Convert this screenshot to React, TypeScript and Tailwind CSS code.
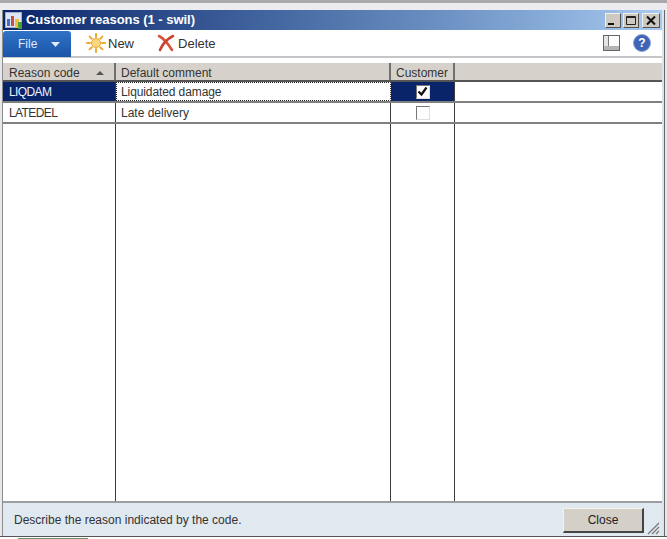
const font = "font-['Liberation_Sans',Arial,sans-serif]";

function AppIcon() {
  return (
    <svg width="18" height="17" viewBox="0 0 18 17" className="shrink-0">
      <rect x="0.5" y="0.5" width="16" height="15" fill="#dfe6f3" stroke="#9fb0d4" />
      <rect x="2" y="7" width="3" height="7" fill="#3c6fd0" />
      <rect x="6" y="4" width="3" height="10" fill="#d24a3a" />
      <rect x="10" y="7" width="4" height="9" fill="#e8c43a" />
      <rect x="13" y="10" width="4" height="7" fill="#4f9d3a" />
    </svg>
  );
}

function SunIcon() {
  return (
    <svg width="20" height="20" viewBox="0 0 20 20">
      <g stroke="#f0a92e" strokeWidth="2" strokeLinecap="round">
        <path d="M10 1v3M10 16v3M1 10h3M16 10h3M3.6 3.6l2.2 2.2M14.2 14.2l2.2 2.2M3.6 16.4l2.2-2.2M14.2 5.8l2.2-2.2" />
      </g>
      <circle cx="10" cy="10" r="4.5" fill="#f9d77e" stroke="#eda52c" />
    </svg>
  );
}

function DeleteIcon() {
  return (
    <svg width="18" height="18" viewBox="0 0 18 18">
      <path d="M2 2c4 2 8 6 13 14" fill="none" stroke="#d8523c" strokeWidth="2.6" strokeLinecap="round" />
      <path d="M16 2C10 5 6 9 3 16" fill="none" stroke="#c9432f" strokeWidth="2.6" strokeLinecap="round" />
    </svg>
  );
}

function WindowButton({ kind, className }: { kind: "min" | "max" | "close"; className: string }) {
  return (
    <div className={`h-[15px] bg-[#cdc9c1] border border-[#f0f0ec] border-r-[#55534f] border-b-[#55534f] flex items-center justify-center ${className}`}>
      <svg width="12" height="11" viewBox="0 0 12 11">
        {kind === "min" && <rect x="1" y="8" width="6" height="2" fill="#111" />}
        {kind === "max" && <path d="M1.5 1.5h9v8h-9zM1.5 2.5h9" fill="none" stroke="#222" />}
        {kind === "close" && <path d="M2 1.5l8 8M10 1.5l-8 8" stroke="#111" strokeWidth="2" />}
      </svg>
    </div>
  );
}

function HeaderCell({ className, children }: { className: string; children?: React.ReactNode }) {
  return (
    <div className={`h-[17px] pt-[2px] flex items-center bg-[#d6d2cb] border-r-2 border-[#6f6f6f] text-[12px] text-[#333] ${className}`}>
      {children}
    </div>
  );
}

function Row({
  code,
  comment,
  checked,
  selected,
}: {
  code: string;
  comment: string;
  checked?: boolean;
  selected?: boolean;
}) {
  return (
    <div className="flex h-[21px] border-b-2 border-[#808080] text-[12px]">
      <div
        className={`w-[113px] pl-[6px] flex items-center border-r border-[#3a3a3a] tracking-[-0.6px] ${
          selected ? "bg-[#0a246a] text-[#eef2ff]" : "text-[#333]"
        }`}
      >
        {code}
      </div>
      <div
        className={`w-[275px] flex items-center border-r border-[#3a3a3a] text-[#333] ${
          selected ? "pl-[4px] border-y border-l border-dotted border-y-[#222] border-l-[#222] tracking-[-0.1px]" : "pl-[5px]"
        }`}
      >
        {comment}
      </div>
      <div className={`w-[64px] flex items-center justify-center border-r border-[#3a3a3a] ${selected ? "bg-[#0a246a]" : ""}`}>
        <div className="w-[14px] h-[14px] bg-white border border-[#777] border-r-[#dedede] border-b-[#dedede] flex items-center justify-center">
          {checked && (
            <svg width="11" height="11" viewBox="0 0 11 11">
              <path d="M1.5 5.5l3 3 5-7" fill="none" stroke="#111" strokeWidth="2.2" />
            </svg>
          )}
        </div>
      </div>
      <div className="flex-1" />
    </div>
  );
}

export default function App() {
  return (
    <div className={`${font} w-[667px] h-[539px] overflow-hidden flex flex-col bg-[#e6e7eb]`}>
      <div className="h-[3px] shrink-0 bg-[#a9a9ab]" />
      <div className="h-[7px] shrink-0 bg-[#ecebef]" />
      <div className="h-[526px] shrink-0 flex flex-col mx-[2px] border-l border-r border-l-[#8d8d8d] border-r-[#666] ">
        <div className="flex-1 min-h-0 flex flex-col bg-white border-r-2 border-[#dfe3ea]">
          {/* title bar */}
          <div className="h-[20px] shrink-0 flex items-center pl-[2px] pr-[2px] bg-gradient-to-r from-[#0a246a] to-[#a6caf0]">
            <AppIcon />
            <span className="ml-[3px] text-[13px] font-bold text-white tracking-[-0.03px]">Customer reasons (1 - swil)</span>
            <div className="ml-auto flex">
              <WindowButton kind="min" className="w-[16px]" />
              <WindowButton kind="max" className="w-[16px] ml-[2px]" />
              <WindowButton kind="close" className="w-[18px] ml-[3px]" />
            </div>
          </div>

          {/* toolbar */}
          <div className="h-[28px] shrink-0 flex items-center bg-white border-b-2 border-[#c6c6c6]">
            <div className="w-[68px] h-[26px] mt-[2px] rounded-t-[3px] bg-gradient-to-b from-[#2f72c6] to-[#1a55a8] flex items-center text-[12px] text-[#dfeaff]">
              <span className="ml-[15px]">File</span>
              <svg width="9" height="5" viewBox="0 0 9 5" className="ml-[14px]">
                <path d="M0 0h9L4.5 5z" fill="#dfeaff" />
              </svg>
            </div>
            <div className="ml-[15px] flex items-center gap-[2px] text-[13px] text-[#333]">
              <SunIcon />
              <span className="pt-[2px]">New</span>
            </div>
            <div className="ml-[23px] flex items-center gap-[3px] text-[13px] text-[#333]">
              <DeleteIcon />
              <span className="pt-[2px]">Delete</span>
            </div>
            <div className="ml-auto mr-[11px] flex items-center gap-[13px]">
              <svg width="17" height="16" viewBox="0 0 17 16">
                <rect x="0.5" y="0.5" width="16" height="15" fill="#fdfdfd" stroke="#666" />
                <rect x="1" y="11" width="15" height="4" fill="#b5b5b5" />
                <rect x="1" y="1" width="4" height="10" fill="#e4e4e4" />
                <path d="M5.5 1v10" stroke="#777" />
              </svg>
              <div className="w-[18px] h-[18px] rounded-full bg-[#3d64b6] border border-[#8ea4d6] flex items-center justify-center text-[12px] font-bold text-white">
                ?
              </div>
            </div>
          </div>

          {/* grid */}
          <div className="h-[5px] shrink-0" />
          <div className="flex-1 min-h-0 flex flex-col">
            <div className="flex shrink-0 border-b-2 border-[#555]">
              <HeaderCell className="w-[113px] pl-[6px] justify-between pr-[10px]">
                <span>Reason code</span>
                <svg width="8" height="4" viewBox="0 0 8 4">
                  <path d="M0 4L4 0l4 4z" fill="#555" />
                </svg>
              </HeaderCell>
              <HeaderCell className="w-[275px] pl-[5px]">Default comment</HeaderCell>
              <HeaderCell className="w-[64px] justify-center">Customer</HeaderCell>
              <div className="flex-1 bg-[#d6d2cb]" />
            </div>
            <Row code="LIQDAM" comment="Liquidated damage" checked selected />
            <Row code="LATEDEL" comment="Late delivery" />
            <div className="flex-1 flex">
              <div className="w-[113px] border-r border-[#3a3a3a]" />
              <div className="w-[275px] border-r border-[#3a3a3a]" />
              <div className="w-[64px] border-r border-[#3a3a3a]" />
            </div>
          </div>

          {/* footer */}
          <div className="h-[35px] shrink-0 flex items-center bg-[#e0e8f0] border-t-2 border-[#9a9fa5] relative">
            <span className="ml-[11px] text-[12px] text-[#333]">Describe the reason indicated by the code.</span>
            <div className="ml-auto mr-[18px] mt-[1px] w-[81px] h-[25px] bg-[#d4d0c8] border border-[#f2f2ee] border-r-2 border-b-2 border-r-[#444] border-b-[#444] flex items-center justify-center text-[12px] text-[#222]">
              Close
            </div>
            <svg width="13" height="13" viewBox="0 0 13 13" className="absolute right-[2px] bottom-[1px]">
              <path d="M1 12L12 1M5 12l7-7M9 12l3-3" stroke="#777" strokeWidth="1.2" />
            </svg>
          </div>
        </div>
      </div>
      <div className="h-[1px] shrink-0 bg-[#555]" />
      <div className="flex-1 bg-white flex pl-[18px]">
        <div className="w-[70px] h-[2px] mt-[1px] bg-[#6f8f6a]" />
      </div>
    </div>
  );
}
